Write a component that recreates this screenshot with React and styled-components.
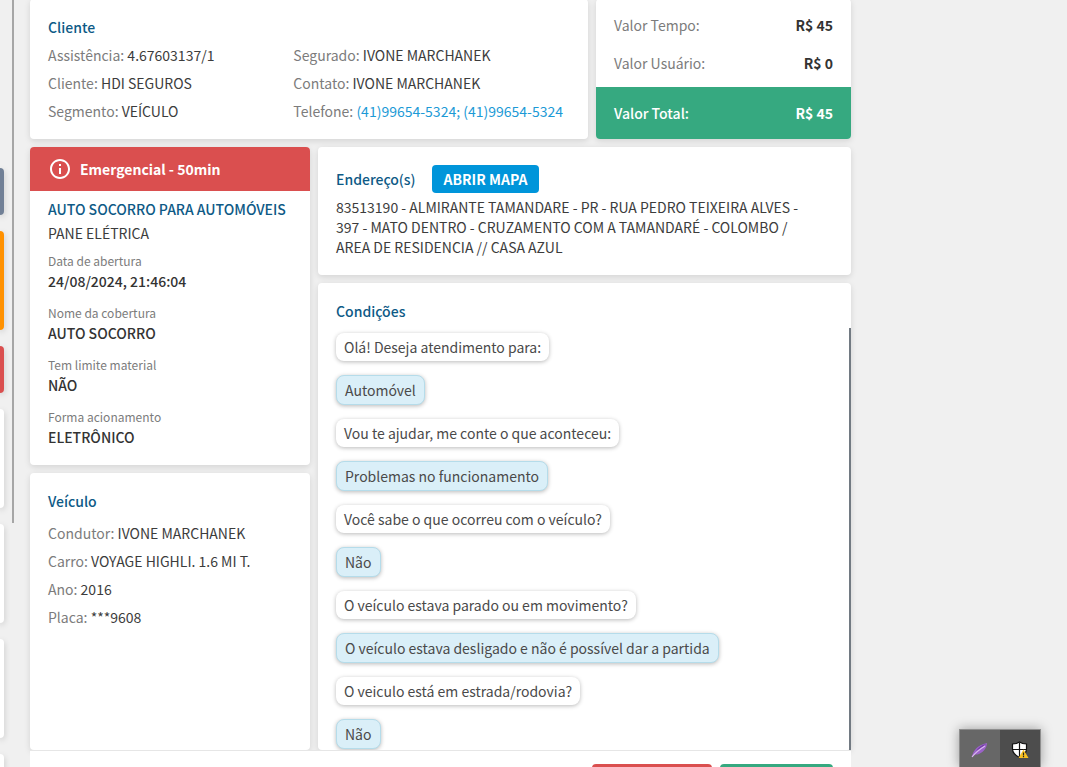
import React from 'react'
import styled, { createGlobalStyle } from 'styled-components'

const GlobalStyle = createGlobalStyle`
  * {
    box-sizing: border-box;
  }
  body {
    margin: 0;
    background: #f0f0f0;
    color: #3c3c3c;
    font-family: "Noto Sans CJK SC", "Noto Sans", sans-serif;
    font-size: 14px;
    line-height: 20px;
  }
  h2, h3, p, dl, dd, ul {
    margin: 0;
    padding: 0;
  }
`

const Page = styled.div`
  display: flex;
  height: 100vh;
  overflow: hidden;
`

const Sidebar = styled.aside`
  display: flex;
  flex-direction: column;
  gap: 16px;
  width: 12px;
  padding: 168px 8px 0 0;
`

const SidebarCard = styled.div`
  flex: none;
  height: ${props => props.$tall ? '99px' : '47px'};
  border-radius: 0 4px 4px 0;
  background: ${props => props.$color || '#fff'};
  box-shadow: 0 2px 6px rgba(0, 0, 0, 0.2);
`

const SidebarScroll = styled.div`
  flex: none;
  width: 2px;
  height: 523px;
  background: #a6a6a6;
`

const Main = styled.main`
  flex: 1;
  min-width: 0;
  display: flex;
  flex-direction: column;
  margin: -1px 216px 0 16px;
`

const TopRow = styled.div`
  display: flex;
  gap: 8px;
  margin-bottom: 8px;
`

const Columns = styled.div`
  flex: 1;
  min-height: 0;
  display: grid;
  grid-template-columns: 280px 1fr;
  gap: 8px;
`

const Column = styled.div`
  display: flex;
  flex-direction: column;
  gap: 8px;
  min-height: 0;
`

const Card = styled.section`
  border-radius: 4px;
  background: #fff;
  box-shadow: 0 2px 6px rgba(0, 0, 0, 0.12);
`

const ClientCard = styled(Card)`
  flex: 1;
  padding: 18px 18px 14px;
`

const Title = styled.h2`
  color: #0e5a86;
  font-size: 14px;
  font-weight: 500;
  line-height: 20px;
`

const ClientFields = styled.div`
  display: grid;
  grid-template-columns: 47% 1fr;
  margin-top: 4px;
`

const Field = styled.p`
  line-height: 28px;
  color: #3c3c3c;

  span {
    color: #7c7c7c;
  }
  a {
    color: #1c9ad6;
    text-decoration: none;
  }
`

const ValuesCard = styled(Card)`
  display: flex;
  flex-direction: column;
  width: 255px;
  padding-top: 7px;
  overflow: hidden;
`

const ValueRow = styled.div`
  display: flex;
  justify-content: space-between;
  align-items: center;
  height: ${props => props.$total ? '52px' : '38px'};
  margin-top: ${props => props.$total ? 'auto' : '0'};
  padding: 0 18px;
  background: ${props => props.$total ? '#36a980' : 'transparent'};
  color: ${props => props.$total ? '#fff' : '#7c7c7c'};
  font-weight: ${props => props.$total ? 500 : 400};

  strong {
    color: ${props => props.$total ? '#fff' : '#333'};
    font-weight: 700;
  }
`

const UrgencyBar = styled.div`
  display: flex;
  align-items: center;
  gap: 8px;
  height: 44px;
  padding: 0 18px;
  border-radius: 4px 4px 0 0;
  background: #da4f4f;
  color: #fff;
  font-weight: 700;
`

const ServiceBody = styled.div`
  padding: 6px 18px 18px;
`

const ServiceTitle = styled(Title)`
  line-height: 24px;
  white-space: nowrap;
`

const ServiceType = styled.p`
  line-height: 24px;
  margin-bottom: 6px;
`

const Details = styled.dl`
  display: grid;
  gap: 12px;

  dt {
    color: #7c7c7c;
    font-size: 12px;
  }
  dd {
    color: #333;
    font-weight: 500;
  }
`

const VehicleCard = styled(Card)`
  flex: 1;
  padding: 18px;
`

const VehicleFields = styled.div`
  margin-top: 8px;
`

const AddressCard = styled(Card)`
  padding: 18px;
`

const AddressHead = styled.div`
  display: flex;
  align-items: center;
  gap: 16px;
  margin-bottom: 4px;
`

const Address = styled.p`
  padding-right: 24px;
`

const MapButton = styled.button`
  height: 28px;
  padding: 0 12px;
  border: 0;
  border-radius: 4px;
  background: #0095da;
  color: #fff;
  font: inherit;
  font-weight: 700;
`

const ConditionsCard = styled(Card)`
  flex: 1;
  min-height: 0;
  display: flex;
  flex-direction: column;
  padding-top: 18px;

  h2 {
    padding: 0 18px;
  }
`

const Chat = styled.ul`
  flex: 1;
  min-height: 0;
  display: flex;
  flex-direction: column;
  align-items: flex-start;
  gap: 14px;
  margin-top: 7px;
  padding: 5px 18px 0;
  border-right: 2px solid #727a82;
  overflow: hidden;
  list-style: none;
`

const Bubble = styled.li`
  flex: none;
  padding: 0 8px;
  border: ${props => props.$answer ? '1px solid #b5dcea' : '0'};
  border-radius: 8px;
  background: ${props => props.$answer ? '#daeff8' : '#fff'};
  box-shadow: 0 1px 4px rgba(0, 0, 0, 0.28);
  color: #4a4a4a;
  line-height: 28px;
`

const Footer = styled.footer`
  display: flex;
  justify-content: flex-end;
  gap: 8px;
  height: 17px;
  padding: 13px 18px 0;
  border-top: 1px solid #e6e6e6;
  background: #fff;
  overflow: hidden;
`

const ActionButton = styled.button`
  flex: none;
  width: ${props => props.$accept ? '113px' : '120px'};
  height: 36px;
  border: 0;
  border-radius: 4px;
  background: ${props => props.$accept ? '#36a980' : '#da4f4f'};
`

const Tray = styled.div`
  position: fixed;
  right: 26px;
  bottom: 0;
  display: flex;
  border: 1px solid #8e8e8e;
  border-bottom: 0;
  box-shadow: 0 0 12px rgba(0, 0, 0, 0.35);
`

const TrayItem = styled.div`
  display: flex;
  align-items: center;
  justify-content: center;
  width: 40px;
  height: 37px;
  padding-top: 3px;
  background: ${props => props.$active ? '#676767' : '#4d4d4d'};
`

const sidebarCards = [
  { color: '#718096' },
  { color: '#ff9100', tall: true },
  { color: '#da4f4f' },
  { tall: true },
  { tall: true },
  { tall: true },
  { tall: true }
]

const details = [
  ['Data de abertura', '24/08/2024, 21:46:04'],
  ['Nome da cobertura', 'AUTO SOCORRO'],
  ['Tem limite material', 'NÃO'],
  ['Forma acionamento', 'ELETRÔNICO']
]

const vehicle = [
  ['Condutor', 'IVONE MARCHANEK'],
  ['Carro', 'VOYAGE HIGHLI. 1.6 MI T.'],
  ['Ano', '2016'],
  ['Placa', '***9608']
]

const messages = [
  'Olá! Deseja atendimento para:',
  'Automóvel',
  'Vou te ajudar, me conte o que aconteceu:',
  'Problemas no funcionamento',
  'Você sabe o que ocorreu com o veículo?',
  'Não',
  'O veículo estava parado ou em movimento?',
  'O veículo estava desligado e não é possível dar a partida',
  'O veiculo está em estrada/rodovia?',
  'Não'
]

const InfoIcon = () => (
  <svg width="24" height="24" viewBox="0 0 24 24" fill="#fff">
    <path d="M11 7h2v2h-2zm0 4h2v6h-2zm1-9C6.48 2 2 6.48 2 12s4.48 10 10 10 10-4.48 10-10S17.52 2 12 2zm0 18c-4.41 0-8-3.59-8-8s3.59-8 8-8 8 3.59 8 8-3.59 8-8 8z" />
  </svg>
)

const FeatherIcon = () => (
  <svg width="18" height="18" viewBox="0 0 18 18">
    <path d="M1 16C2 10 6 4 16 2c0 4-3 9-8 11-2 1-4 0-5 1z" fill="#9b62c8" />
    <path d="M5 10C7 7 10 4 15 3c-2 2-5 4-10 7z" fill="#7440a4" />
    <path d="M1 16C5 11 9 8 14 5" fill="none" stroke="#d9b8ef" strokeWidth="1.2" />
  </svg>
)

const ShieldIcon = () => (
  <svg width="18" height="18" viewBox="0 0 18 18">
    <path d="M8.500 1c2 1.500 4.500 2 7 2v5c0 4-3 6.500-7 8.500-4-2-7-4.500-7-8.500V3c2.500 0 5-.5 7-2z" fill="#fff" stroke="#111" strokeWidth="1.200" />
    <path d="M8.500 1.500V16M1.500 8.500h14" stroke="#111" strokeWidth="1.200" />
    <path d="M12.500 8.500L17.500 17H7.500z" fill="#f9c022" />
    <path d="M12.500 11.500v3M12.500 15v1.200" stroke="#222" strokeWidth="1.200" />
  </svg>
)

const FieldLine = ({ label, children }) => (
  <Field><span>{label}:</span> {children}</Field>
)

const App = () => {
  return (
    <>
      <GlobalStyle />
      <Page>
        <Sidebar>
          {sidebarCards.map((card, i) => (
            <SidebarCard key={i} $color={card.color} $tall={card.tall} />
          ))}
        </Sidebar>
        <SidebarScroll />
        <Main>
          <TopRow>
            <ClientCard>
              <Title>Cliente</Title>
              <ClientFields>
                <div>
                  <FieldLine label="Assistência">4.67603137/1</FieldLine>
                  <FieldLine label="Cliente">HDI SEGUROS</FieldLine>
                  <FieldLine label="Segmento">VEÍCULO</FieldLine>
                </div>
                <div>
                  <FieldLine label="Segurado">IVONE MARCHANEK</FieldLine>
                  <FieldLine label="Contato">IVONE MARCHANEK</FieldLine>
                  <FieldLine label="Telefone">
                    <a href="tel:41996545324">(41)99654-5324; (41)99654-5324</a>
                  </FieldLine>
                </div>
              </ClientFields>
            </ClientCard>
            <ValuesCard>
              <ValueRow>Valor Tempo: <strong>R$ 45</strong></ValueRow>
              <ValueRow>Valor Usuário: <strong>R$ 0</strong></ValueRow>
              <ValueRow $total>Valor Total: <strong>R$ 45</strong></ValueRow>
            </ValuesCard>
          </TopRow>
          <Columns>
            <Column>
              <Card>
                <UrgencyBar><InfoIcon />Emergencial - 50min</UrgencyBar>
                <ServiceBody>
                  <ServiceTitle>AUTO SOCORRO PARA AUTOMÓVEIS</ServiceTitle>
                  <ServiceType>PANE ELÉTRICA</ServiceType>
                  <Details>
                    {details.map(([label, value]) => (
                      <div key={label}>
                        <dt>{label}</dt>
                        <dd>{value}</dd>
                      </div>
                    ))}
                  </Details>
                </ServiceBody>
              </Card>
              <VehicleCard>
                <Title>Veículo</Title>
                <VehicleFields>
                  {vehicle.map(([label, value]) => (
                    <FieldLine key={label} label={label}>{value}</FieldLine>
                  ))}
                </VehicleFields>
              </VehicleCard>
            </Column>
            <Column>
              <AddressCard>
                <AddressHead>
                  <Title>Endereço(s)</Title>
                  <MapButton type="button">ABRIR MAPA</MapButton>
                </AddressHead>
                <Address>
                  83513190 - ALMIRANTE TAMANDARE - PR - RUA PEDRO TEIXEIRA ALVES -
                  397 - MATO DENTRO - CRUZAMENTO COM A TAMANDARÉ - COLOMBO /
                  AREA DE RESIDENCIA // CASA AZUL
                </Address>
              </AddressCard>
              <ConditionsCard>
                <Title>Condições</Title>
                <Chat>
                  {messages.map((message, i) => (
                    <Bubble key={i} $answer={i % 2 === 1}>{message}</Bubble>
                  ))}
                </Chat>
              </ConditionsCard>
            </Column>
          </Columns>
          <Footer>
            <ActionButton type="button" aria-label="Recusar" />
            <ActionButton type="button" aria-label="Aceitar" $accept />
          </Footer>
        </Main>
      </Page>
      <Tray>
        <TrayItem $active><FeatherIcon /></TrayItem>
        <TrayItem><ShieldIcon /></TrayItem>
      </Tray>
    </>
  )
}

export default App
